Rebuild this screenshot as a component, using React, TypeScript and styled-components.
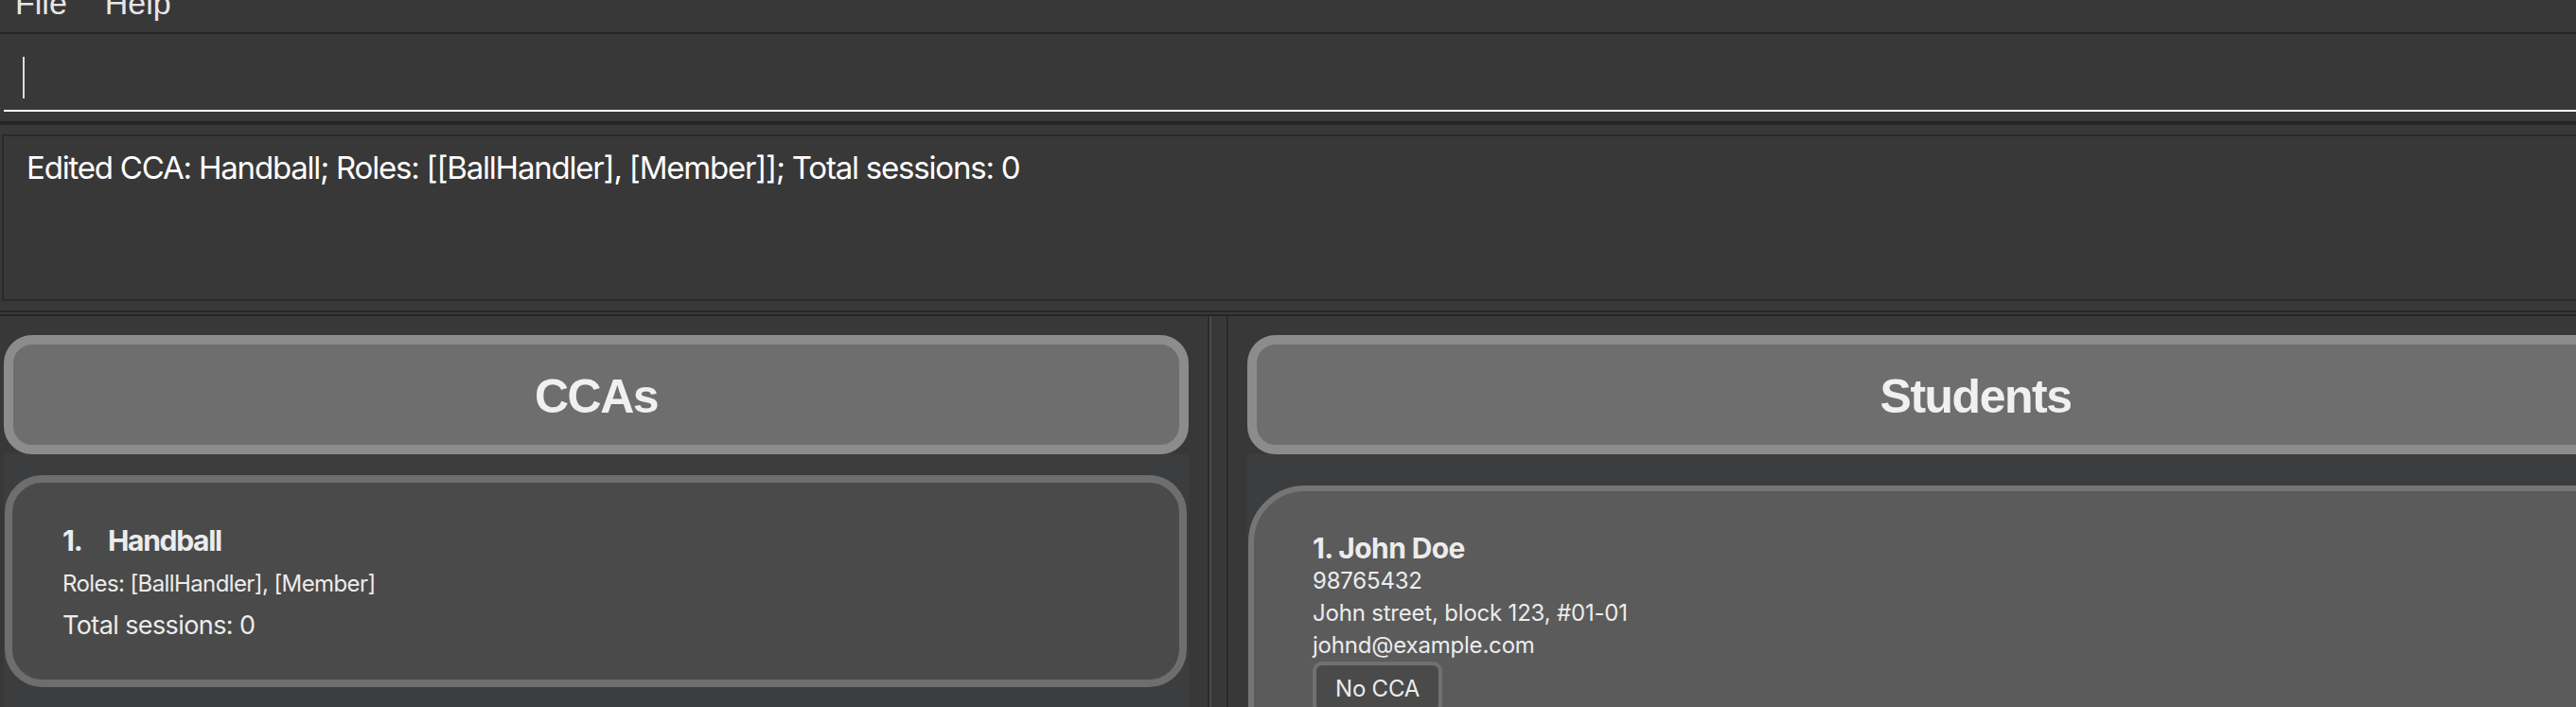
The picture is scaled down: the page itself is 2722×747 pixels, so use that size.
import React from "react";
import styled, { createGlobalStyle } from "styled-components";

const GlobalStyle = createGlobalStyle`
  *, *::before, *::after { box-sizing: border-box; }
  html, body { margin: 0; padding: 0; overflow: hidden; background: #383838; }
  #root { width: 2877px; }
`;

const Window = styled.div`
  width: 2877px;
  height: 900px;
  background: #383838;
  display: flex;
  flex-direction: column;
  font-family: Inter, "Noto Sans", sans-serif;
  color: #ffffff;
`;

const MenuBar = styled.div`
  height: 36px;
  flex: none;
  display: flex;
  align-items: flex-end;
  gap: 40px;
  padding-left: 16px;
  border-bottom: 2px solid #262626;
`;

const MenuItem = styled.span`
  font-family: "Liberation Sans", Arial, sans-serif;
  font-size: 34px;
  line-height: 34px;
  color: #e6e6e6;
  margin-bottom: 14px;
`;

const CommandBar = styled.div`
  height: 96px;
  flex: none;
  padding: 0 0 10px 4px;
  border-bottom: 4px solid #262626;
`;

const CommandInput = styled.div`
  height: 82px;
  border-bottom: 2px solid #ffffff;
  display: flex;
  align-items: flex-start;
  padding: 24px 0 0 20px;
`;

const Caret = styled.span`
  display: block;
  width: 2px;
  height: 44px;
  background: #dcdcdc;
`;

const ResultArea = styled.div`
  height: 198px;
  flex: none;
  padding: 10px 0 10px 2px;
  border-bottom: 2px solid #262626;
`;

const ResultBox = styled.div`
  height: 176px;
  border: 2px solid #2a2a2a;
  padding: 13px 24px 0;
  font-size: 33px;
  line-height: 40px;
  letter-spacing: -1.2px;
  color: #ffffff;
`;

const SplitPane = styled.div`
  flex: 1;
  display: flex;
  margin-top: 2px;
  border-top: 2px solid #262626;
  min-height: 0;
`;

const Panel = styled.div<{ $width?: number; $padLeft: number }>`
  ${(p) => (p.$width ? `width: ${p.$width}px; flex: none;` : "flex: 1;")}
  display: flex;
  flex-direction: column;
  padding: 20px 20px 0 ${(p) => p.$padLeft}px;
  border-right: ${(p) => (p.$width ? "2px solid #2a2a2a" : "none")};
  border-left: ${(p) => (p.$width ? "none" : "2px solid #2a2a2a")};
`;

const Divider = styled.div`
  width: 18px;
  flex: none;
  border-left: 2px solid #4b4b4b;
  background: #383838;
`;

const PanelHeader = styled.div`
  height: 126px;
  flex: none;
  border: 10px solid #8c8c8c;
  border-radius: 30px;
  background: #6e6e6e;
  display: flex;
  align-items: center;
  justify-content: center;
  padding-top: 3px;
`;

const PanelTitle = styled.h1`
  margin: 0;
  font-family: "Liberation Sans", Arial, sans-serif;
  font-weight: 700;
  font-size: 50px;
  letter-spacing: -1.5px;
  color: #f0f0f0;
`;

const ListArea = styled.div<{ $padTop: number }>`
  flex: 1;
  background: #3c3d3f;
  padding-top: ${(p) => p.$padTop}px;
`;

const CcaCard = styled.div`
  height: 224px;
  margin: 0 2px 0 1px;
  border: 8px solid #6e6e6e;
  border-radius: 40px;
  background: #4a4a4a;
  padding: 39px 53px 0;
  color: #ececec;
`;

const CcaTitle = styled.div`
  display: flex;
  font-size: 30px;
  font-weight: 700;
  line-height: 44px;
  letter-spacing: -1.3px;
`;

const CcaIndex = styled.span`
  width: 48px;
  flex: none;
`;

const CcaLine = styled.div<{ $size: number; $gap: number; $track: number }>`
  font-size: ${(p) => p.$size}px;
  line-height: 44px;
  margin-top: ${(p) => p.$gap}px;
  letter-spacing: ${(p) => p.$track}px;
`;

const StudentCard = styled.div`
  height: 400px;
  margin-left: 1px;
  border: 6px solid #757575;
  border-radius: 60px;
  background: #5b5b5b;
  padding: 42px 62px;
  color: #ececec;
`;

const StudentName = styled.div`
  font-size: 30px;
  font-weight: 700;
  line-height: 36px;
  letter-spacing: -0.6px;
`;

const StudentLine = styled.div`
  font-size: 24px;
  line-height: 34px;
  letter-spacing: -0.2px;
`;

const Tag = styled.span`
  display: inline-block;
  border: 4px solid #717171;
  border-radius: 10px;
  background: #4a4a4a;
  padding: 8px 20px 6px;
  font-size: 24px;
  line-height: 34px;
  letter-spacing: -0.2px;
  color: #ececec;
`;

export default function App() {
  return (
    <>
      <GlobalStyle />
      <Window>
        <MenuBar>
          <MenuItem>File</MenuItem>
          <MenuItem>Help</MenuItem>
        </MenuBar>
        <CommandBar>
          <CommandInput>
            <Caret />
          </CommandInput>
        </CommandBar>
        <ResultArea>
          <ResultBox>
            Edited CCA: Handball; Roles: [[BallHandler], [Member]]; Total sessions: 0
          </ResultBox>
        </ResultArea>
        <SplitPane>
          <Panel $width={1278} $padLeft={4}>
            <PanelHeader>
              <PanelTitle>CCAs</PanelTitle>
            </PanelHeader>
            <ListArea $padTop={22}>
              <CcaCard>
                <CcaTitle>
                  <CcaIndex>1.</CcaIndex>
                  <span>Handball</span>
                </CcaTitle>
                <CcaLine $size={24} $gap={2} $track={-0.6}>
                  Roles: [BallHandler], [Member]
                </CcaLine>
                <CcaLine $size={27} $gap={0} $track={-0.6}>
                  Total sessions: 0
                </CcaLine>
              </CcaCard>
            </ListArea>
          </Panel>
          <Divider />
          <Panel $padLeft={20}>
            <PanelHeader>
              <PanelTitle>Students</PanelTitle>
            </PanelHeader>
            <ListArea $padTop={33}>
              <StudentCard>
                <StudentName>1. John Doe</StudentName>
                <StudentLine>98765432</StudentLine>
                <StudentLine>John street, block 123, #01-01</StudentLine>
                <StudentLine>johnd@example.com</StudentLine>
                <Tag>No CCA</Tag>
              </StudentCard>
            </ListArea>
          </Panel>
        </SplitPane>
      </Window>
    </>
  );
}
